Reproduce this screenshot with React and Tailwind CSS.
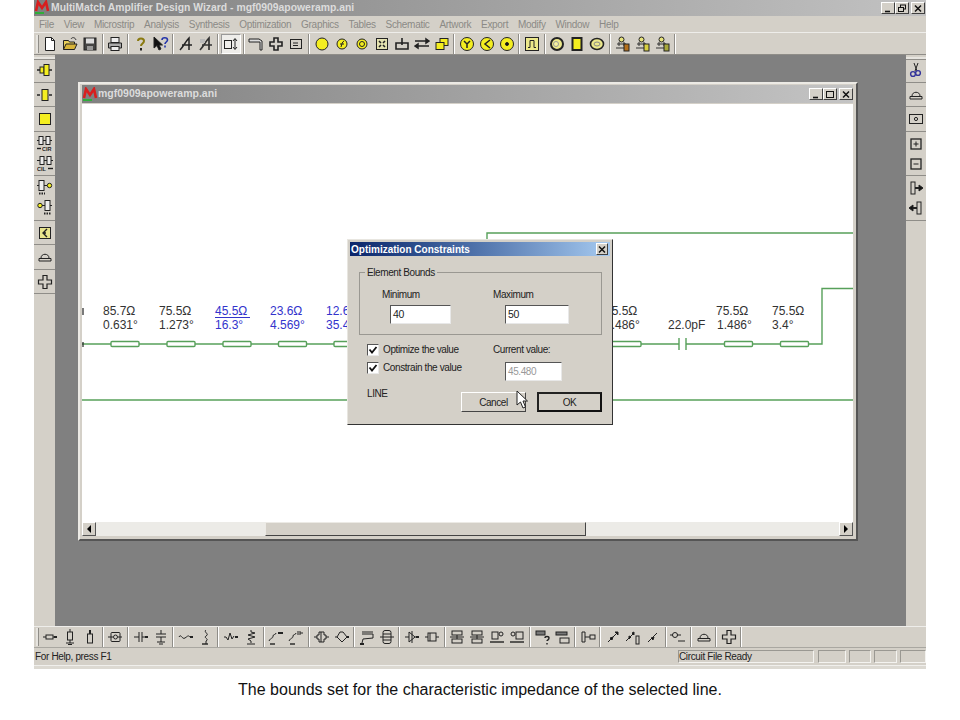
import React from 'react';

const I = ({ children }) => (
  <svg width="16" height="16" viewBox="0 0 16 16" fill="none" stroke="#222" strokeWidth="1" className="block">
    {children}
  </svg>
);

const Logo = () => (
  <svg width="16" height="15" viewBox="0 0 16 15" className="block shrink-0">
    <path d="M2 11 L4 2 L8 8 L12 2 L14 11" fill="none" stroke="#d81e1e" strokeWidth="2.6" />
    <path d="M1 13 H10" stroke="#2fae3a" strokeWidth="2" />
  </svg>
);

const Circle = ({ children, r = 5 }) => (
  <I>
    <circle cx="8" cy="8" r={r} fill="#f4ee20" />
    {children}
  </I>
);

const Hat = () => (
  <I>
    <path d="M4 9 C4 4 12 4 12 9" />
    <path d="M2 9.5 H14 V12 H2 Z" />
  </I>
);

const Plus = () => (
  <I>
    <path d="M6 1.5 H10 V6 H14.5 V10 H10 V14.5 H6 V10 H1.5 V6 H6 Z" strokeWidth="1.2" />
  </I>
);

const Person = ({ color }) => (
  <I>
    <circle cx="6.5" cy="3.5" r="2.5" fill="#e6e27a" />
    <path d="M2 8 H11 M4 6 V10 M9 6 V10 M1 12 H9" stroke="#333" />
    <rect x="9" y="8" width="5" height="7" fill={color} />
  </I>
);

const topIcons = [
  <I><path d="M3.5 1.5 H9.5 L12.5 4.5 V14.5 H3.5 Z" fill="#fff" /><path d="M9.5 1.5 V4.5 H12.5" /></I>,
  <I><path d="M1.5 13.5 V4.5 H6.5 L7.5 6 H12.5 V8" fill="#e8cf5a" /><path d="M1.5 13.5 L4 8 H15 L12.5 13.5 Z" fill="#d8b53a" /><path d="M9 3 C10 1 13 1 14 4" stroke="#333" /></I>,
  <I><rect x="2" y="2" width="12" height="12" fill="#444" /><rect x="4" y="2.5" width="8" height="5" fill="#ddd" stroke="none" /><rect x="5" y="10" width="6" height="4" fill="#999" stroke="none" /></I>,
  <I><rect x="4" y="1.5" width="8" height="5" fill="#eee" /><path d="M1.5 7 H14.5 V12 H1.5 Z" fill="#aaa" /><rect x="4" y="10.5" width="8" height="4" fill="#eee" /></I>,
  <I><path d="M5 5 C5 1.5 11 1.5 11 5 C11 7.5 8 7.5 8 10" stroke="#8a7a10" strokeWidth="2" /><path d="M8 12 V14.5" stroke="#222" strokeWidth="2" /></I>,
  <I><path d="M1 1 V12 L4 9.5 L6 14 L8 13 L6 9 H9.5 Z" fill="#111" /><path d="M9 4 C9 1 14.5 1 14.5 4 C14.5 6 12 6 12 8" stroke="#2233aa" strokeWidth="1.6" /><path d="M12 9.5 V11.5" stroke="#2233aa" strokeWidth="1.6" /></I>,
  <I><path d="M2 14 C5 11 8 5 11 2 L11 14 M4 9 H14" strokeWidth="1.5" /></I>,
  <I><path d="M2 14 C5 11 8 5 11 2 L11 14 M4 9 H14" strokeWidth="1.7" stroke="#333" /><path d="M2 3 H7 V7 H2 Z" fill="#bbb" stroke="none" /></I>,
  'pressed',
  <I><path d="M1 3 H11 L14 5 V14 H12 V6 H1 Z" fill="#ddd" /></I>,
  <I><path d="M6 2 H10 V6 H14 V10 H10 V14 H6 V10 H2 V6 H6 Z" strokeWidth="1.6" /></I>,
  <I><rect x="2.5" y="3.5" width="11" height="9" /><path d="M5 7 H10 M5 9.5 H10" /></I>,
  <Circle r={6} />,
  <Circle><path d="M7 11 C8 8 8 6 10 5 M6 8 H10" /></Circle>,
  <Circle><circle cx="8" cy="8" r="2.5" /></Circle>,
  <I><rect x="2.5" y="2.5" width="11" height="11" fill="#e4e2b0" /><path d="M5 5 L7 7 M11 5 L9 7 M5 11 L7 9 M11 11 L9 9" strokeWidth="1.6" /></I>,
  <I><path d="M2 7 H14 V13 H2 Z" strokeWidth="1.6" /><path d="M8 2 V9" strokeWidth="1.6" /></I>,
  <I><path d="M1 5 H13 M15 5 L12 3 V7 Z M3 10 H15 M1 10 L4 8 V12 Z" fill="#111" strokeWidth="1.5" /></I>,
  <I><rect x="6" y="2.5" width="8" height="7" fill="#f4ee20" /><rect x="2" y="6.5" width="8" height="7" fill="#f4ee20" /></I>,
  <Circle r={6.5}><path d="M5 5 L8 8 L11 5 M8 8 V12" strokeWidth="1.5" /></Circle>,
  <Circle r={6.5}><path d="M11 4 L6 8 L11 12" strokeWidth="1.5" /></Circle>,
  <Circle r={6.5}><circle cx="8" cy="8" r="1.5" fill="#111" /></Circle>,
  <I><rect x="1.5" y="1.5" width="13" height="13" fill="#ece88a" /><path d="M4 11.5 H6 V4.5 H10 V11.5 H12" /></I>,
  <I><circle cx="8" cy="8" r="6" fill="#ece88a" strokeWidth="2" /><circle cx="7" cy="8" r="2.5" fill="#f6f2a0" stroke="#999" /></I>,
  <I><rect x="3.5" y="2" width="9" height="12" fill="#f4ee20" strokeWidth="2" /></I>,
  <I><ellipse cx="8" cy="8" rx="6.5" ry="5.5" fill="#ece88a" strokeWidth="1.6" /><ellipse cx="8" cy="8" rx="3" ry="2" stroke="#888" /></I>,
  <Person color="#b5701c" />,
  <Person color="#d8d040" />,
  <Person color="#a8a83a" />,
];

// layout of the top bar, a number is a run of buttons
const topRuns = [3, 1, 2, 2, 1, 3, 7, 3, 1, 3, 3];

const Res = ({ x = 4, w = 7 }) => <rect x={x} y="6" width={w} height="4" />;
const Tip = () => <path d="M12 8 H15" strokeWidth="2" />;
const Stack = () => (
  <I><rect x="3" y="2" width="10" height="4" /><rect x="3" y="10" width="10" height="4" /><path d="M1 8 H15 M8 6 V10" /></I>
);
const Wave = () => <path d="M1 8 C3 4 4 11 7 9 S10 6 12 8" />;

const bottomIcons = [
  <I><path d="M1 8 H4" /><Res /><path d="M11 8 H12" /><Tip /></I>,
  <I><rect x="5.5" y="3" width="5" height="8" /><path d="M8 0 V3 M8 11 V14 M4 14 H12 M6 15.5 H10" /></I>,
  <I><rect x="5.5" y="5" width="5" height="9" /><path d="M8 1 V5" strokeWidth="2" /></I>,
  <I><rect x="4" y="3.5" width="9" height="9" rx="1" /><circle cx="8.5" cy="8" r="2" /><path d="M1 8 H6 M11 8 H15" /></I>,
  <I><path d="M1 8 H6 M6 3 V13 M9 3 V13 M9 8 H12" /><Tip /></I>,
  <I><path d="M8 1 V5 M3 5 H13 M3 8 H13 M8 8 V13 M4 13 H12 M6 15 H10" /></I>,
  <I><Wave /><Tip /></I>,
  <I><path d="M8 1 C5 3 12 5 8 7 C5 9 12 10 8 12 M8 12 V15" /><path d="M4 15 H10" strokeWidth="1.4" /></I>,
  <I><path d="M1 8 H3 L5 11 L7 4 L9 10 L11 7" /><Tip /></I>,
  <I><path d="M8 1 V3 L12 4 L5 6 L12 8 L5 10 L8 12 V14 M4 15 H12" /></I>,
  <I><path d="M1 12 C3 8 5 10 5 7 C5 5 8 6 8 4" /><path d="M10 4 H15" strokeWidth="2" /><path d="M2 15 H7" strokeWidth="1.4" /></I>,
  <I><path d="M1 12 C3 8 5 10 5 7 C5 5 8 6 8 4" /><path d="M10 2 V6 M12 2 V6 M12 4 H15" /><path d="M2 15 H7" strokeWidth="1.4" /></I>,
  <I><path d="M5 3 H10 V6 H12 V10 H10 V13 H5 V10 H3 V6 H5 Z M7 3 V13 M0 8 H3 M12 8 H15" /></I>,
  <I><path d="M1 8 H3 L6 3 H9 L13 8 L8 13 L3 8" /><path d="M13 8 H15" strokeWidth="2" /></I>,
  <I><path d="M3 3 H14 M3 5 H14 V9 L4 10 L3 14" /><path d="M1 15 H5" strokeWidth="2" /></I>,
  <I><rect x="4" y="1.5" width="8" height="13" rx="2" /><path d="M1 8 H15 M4 5 H12 M4 11 H12" /></I>,
  <I><path d="M1 8 H5 M5 3 L11 8 L5 13 Z M8 2 V14 M11 8 H13" /><Tip /></I>,
  <I><rect x="4" y="4" width="8" height="8" /><path d="M6 4 V12 M1 8 H4 M12 8 H15" /></I>,
  <Stack />,
  <Stack />,
  <I><rect x="3" y="3" width="6" height="7" /><circle cx="12" cy="5" r="2" /><path d="M1 13 H15" strokeWidth="1.4" /></I>,
  <I><circle cx="4" cy="5" r="2" /><rect x="7" y="3" width="7" height="7" /><path d="M1 13 H15" strokeWidth="1.4" /></I>,
  <I><rect x="1" y="2" width="9" height="4" fill="#777" /><path d="M10 9 C10 7 14 7 14 9 C14 11 12 11 12 12 M12 14 V15.5" strokeWidth="1.4" /></I>,
  <I><rect x="1" y="3" width="11" height="3" fill="#777" /><rect x="5" y="9" width="9" height="5" /></I>,
  <I><path d="M2 3 V13 M2 3 H5 V13 H2 M5 8 H10" /><rect x="10" y="6" width="5" height="4" /></I>,
  <I><path d="M3 13 L13 3" /><path d="M5 9 L8 8 L7 11 Z M13 3 L10 3 L13 6 Z" fill="#111" /></I>,
  <I><path d="M1 12 L9 4" /><path d="M4 7 L6 8 L4 10 Z M9 3 L7 4 L9 6 Z" fill="#111" /><rect x="11" y="7" width="3" height="8" /></I>,
  <I><path d="M3 13 L12 4" /><path d="M6 9 L9 8 L8 11 Z" fill="#111" /></I>,
  <I><circle cx="5" cy="6" r="2.5" /><path d="M0 6 H3 M7 6 H11 M8 12 H15" strokeWidth="1.2" /></I>,
  <Hat />,
  <Plus />,
];
const bottomRuns = [3, 1, 2, 2, 2, 2, 2, 2, 2, 4, 2, 1, 3, 1, 1, 1];

const Lead = ({ children }) => (
  <I>
    <path d="M0 8 H3 M12 8 H15" strokeWidth="1.6" />
    {children}
  </I>
);

const leftIcons = [
  <Lead><rect x="3" y="5" width="4" height="6" fill="#f4ee20" /><rect x="7" y="2.5" width="5" height="11" fill="#f4ee20" /></Lead>,
  <Lead><rect x="5" y="2.5" width="6" height="11" fill="#f4ee20" /></Lead>,
  <I><rect x="2.5" y="2.5" width="11" height="11" fill="#f4ee20" /></I>,
  <I><rect x="2" y="0.5" width="4" height="8" fill="#eee" /><rect x="9" y="0.5" width="4" height="8" fill="#eee" /><path d="M6 4.5 H9 M0 4.5 H2 M13 4.5 H15" /><path d="M0 12.5 H4" strokeWidth="1.4" /><text x="5" y="15" fontSize="5.5" fontWeight="700" fill="#222" stroke="none">CIR</text></I>,
  <I><rect x="3" y="0.5" width="4" height="8" fill="#eee" /><rect x="10" y="0.5" width="4" height="8" fill="#eee" /><path d="M7 4.5 H10 M0 4.5 H3 M14 4.5 H16" /><text x="0" y="15" fontSize="5.5" fontWeight="700" fill="#222" stroke="none">CIL</text><path d="M11 12.5 H16" strokeWidth="1.4" /></I>,
  <I><rect x="2" y="0.5" width="5" height="10" fill="#eee" /><path d="M7 5.5 H10 M0 5.5 H2" /><circle cx="12.5" cy="5.5" r="2.2" fill="#f4ee20" /><path d="M2 13.5 H8" strokeWidth="2" strokeDasharray="1.5 1" /></I>,
  <I><circle cx="3" cy="5.5" r="2.2" fill="#f4ee20" /><path d="M5 5.5 H8 M13 5.5 H15" /><rect x="8" y="0.5" width="5" height="10" fill="#eee" /><path d="M7 13.5 H14" strokeWidth="2" strokeDasharray="1.5 1" /></I>,
  <I><rect x="2.5" y="2.5" width="11" height="11" fill="#e8e48c" /><path d="M10 4 L6 8 L10 12 M6 8 H9" strokeWidth="1.4" /></I>,
  <Hat />,
  <Plus />,
];
const leftRuns = [1, 1, 1, 2, 2, 1, 1, 1];

const rightIcons = [
  <I><path d="M6 1 L9 9 M10 1 L7 9" /><circle cx="5" cy="12" r="2.4" stroke="#33339a" strokeWidth="1.4" /><circle cx="10" cy="11" r="2.4" stroke="#33339a" strokeWidth="1.4" /></I>,
  <Hat />,
  <I><rect x="1.5" y="3.5" width="13" height="9" /><circle cx="8" cy="8" r="1.6" /></I>,
  <I><rect x="3" y="3" width="10" height="10" strokeWidth="1.3" /><path d="M5.5 8 H10.5 M8 5.5 V10.5" /></I>,
  <I><rect x="3" y="3" width="10" height="10" strokeWidth="1.3" /><path d="M5.5 8 H10.5" /></I>,
  <I><rect x="3" y="2" width="4" height="12" /><path d="M7 8 H12" strokeWidth="2" /><path d="M15 8 L11 5 V11 Z" fill="#111" /></I>,
  <I><rect x="9" y="2" width="4" height="12" /><path d="M4 8 H9" strokeWidth="2" /><path d="M1 8 L5 5 V11 Z" fill="#111" /></I>,
];
const rightRuns = [1, 1, 1, 2, 2];

const Btn = ({ children }) => {
  if (children === 'pressed') {
    return (
      <div className="w-[20px] h-[20px] flex items-center justify-center bg-[#eeedea] border border-t-[#999] border-l-[#999] border-r-white border-b-white">
        <svg width="16" height="16" viewBox="0 0 16 16" fill="none" stroke="#222" className="block">
          <rect x="1.5" y="4.5" width="7" height="8" />
          <path d="M12 3 V13 M10 5 L12 2.5 L14 5 M10 11 L12 13.5 L14 11" />
        </svg>
      </div>
    );
  }
  return <div className="w-[20px] h-[20px] shrink-0 flex items-center justify-center">{children}</div>;
};

// walk the runs so each group of buttons ends in a separator
const HBar = ({ icons, runs }) => {
  let n = 0;
  return runs.map((run, i) => {
    const group = icons.slice(n, n + run);
    n += run;
    return (
      <React.Fragment key={i}>
        {group.map((ic, j) => <Btn key={j}>{ic}</Btn>)}
        <div className="w-[5.25px] h-[20px] flex justify-center">
          <div className="w-[1px] h-full bg-[#8f8d88] border-r border-white box-content" />
        </div>
      </React.Fragment>
    );
  });
};

const VBar = ({ icons, runs }) => {
  let n = 0;
  return runs.map((run, i) => {
    const group = icons.slice(n, n + run);
    n += run;
    return (
      <React.Fragment key={i}>
        {group.map((ic, j) => <Btn key={j}>{ic}</Btn>)}
        <div className="h-[4.5px] w-full flex items-center">
          <div className="h-[1px] w-full bg-[#8f8d88]" />
        </div>
      </React.Fragment>
    );
  });
};

const Grip = () => <div className="w-[3px] h-[18px] ml-[2px] mr-[1px] bg-[#e6e4df] border-r border-[#8f8d88]" />;
const VGrip = () => <div className="h-[3px] w-full mt-[2px] bg-[#e6e4df] border-b border-[#8f8d88]" />;

const CaptionBtn = ({ children, className = 'w-[14px]' }) => (
  <div className={`${className} h-[12px] bg-[#d4d0c8] border border-t-white border-l-white border-r-[#404040] border-b-[#404040] flex items-center justify-center`}>
    <svg width="10" height="9" viewBox="0 0 10 9" fill="none" stroke="#111" className="block">{children}</svg>
  </div>
);

const Check = () => (
  <div className="w-[12px] h-[12px] bg-white border border-t-[#555] border-l-[#555] border-r-[#e8e8e8] border-b-[#e8e8e8] flex items-center justify-center shrink-0">
    <svg width="10" height="10" viewBox="0 0 10 10" fill="none" stroke="#111" strokeWidth="1.8" className="block">
      <path d="M1.5 4.5 L4 7.5 L8.5 2" />
    </svg>
  </div>
);

const Input = ({ value, className }) => (
  <div className={`${className} h-[19px] bg-white border border-t-[#555] border-l-[#555] border-r-[#e8e8e8] border-b-[#e8e8e8] pl-[2px] text-[10.5px] leading-[17px] text-[#222]`}>
    {value}
  </div>
);

const Schematic = () => (
  <svg width="771" height="419" viewBox="82 104 771 419" className="absolute left-0 top-0 font-['Liberation_Sans',Arial,sans-serif]">
    <g fill="none" stroke="#57a05a" strokeWidth="1.4">
      <path d="M487 240 V233 H853" />
      <path d="M82 344 H400" />
      <path d="M600 344 H679 M686 344 H822 V288.5 H853" />
      <path d="M82 400 H853" />
      <path d="M679 338 V350 M686 338 V350" />
      <g fill="#fff">
        <rect x="111" y="341.5" width="28" height="5" rx="1" />
        <rect x="167" y="341.5" width="28" height="5" rx="1" />
        <rect x="223" y="341.5" width="28" height="5" rx="1" />
        <rect x="278.5" y="341.5" width="28" height="5" rx="1" />
        <rect x="334" y="341.5" width="28" height="5" rx="1" />
        <rect x="612" y="341.5" width="29" height="5" rx="1" />
        <rect x="724.5" y="341.5" width="28" height="5" rx="1" />
        <rect x="780.5" y="341.5" width="28" height="5" rx="1" />
      </g>
    </g>
    <path d="M83 308 V315 M83 342 V347" stroke="#222" strokeWidth="1.2" />
    <path d="M215 317.5 H250" stroke="#3333cc" strokeWidth="1" />
    <g fontSize="12" fill="#333">
      <text x="103" y="315">85.7Ω</text>
      <text x="103" y="329">0.631°</text>
      <text x="159" y="315">75.5Ω</text>
      <text x="159" y="329">1.273°</text>
      <text x="605" y="315">75.5Ω</text>
      <text x="605" y="329">1.486°</text>
      <text x="668" y="329">22.0pF</text>
      <text x="716" y="315">75.5Ω</text>
      <text x="717" y="329">1.486°</text>
      <text x="772" y="315">75.5Ω</text>
      <text x="772" y="329">3.4°</text>
    </g>
    <g fontSize="12" fill="#3333cc">
      <text x="215" y="315">45.5Ω</text>
      <text x="215" y="329">16.3°</text>
      <text x="270" y="315">23.6Ω</text>
      <text x="270" y="329">4.569°</text>
      <text x="326" y="315">12.6Ω</text>
      <text x="326" y="329">35.4°</text>
    </g>
  </svg>
);

const menus = ['File', 'View', 'Microstrip', 'Analysis', 'Synthesis', 'Optimization', 'Graphics', 'Tables', 'Schematic', 'Artwork', 'Export', 'Modify', 'Window', 'Help'];

const Dialog = () => (
  <div className="absolute left-[292px] top-[184px] w-[266px] h-[186px] bg-[#d4d0c8] border border-t-[#e8e6e0] border-l-[#e8e6e0] border-r-[#333] border-b-[#333] p-[2px] text-[10px] tracking-[-0.4px] text-[#222]">
    <div className="h-[14px] flex items-center justify-between pl-[1px] pr-[2px] bg-gradient-to-r from-[#0a246a] to-[#a6caf0]">
      <span className="text-white font-bold text-[10px] tracking-normal">Optimization Constraints</span>
      <CaptionBtn className="w-[12px]"><path d="M2 1.5 L8 7.5 M8 1.5 L2 7.5" strokeWidth="1.5" /></CaptionBtn>
    </div>
    <div className="relative mt-[16px] ml-[9px] w-[243px] h-[63px] border border-[#9a9892]">
      <span className="absolute -top-[6px] left-[5px] bg-[#d4d0c8] px-[2px] leading-[12px]">Element Bounds</span>
      <div className="flex pt-[16px]">
        <div className="w-[111px] pl-[22px]">
          <div className="leading-[12px]">Minimum</div>
          <Input value="40" className="w-[61px] mt-[4px] ml-[8px]" />
        </div>
        <div className="pl-[22px]">
          <div className="leading-[12px]">Maximum</div>
          <Input value="50" className="w-[64px] mt-[4px] ml-[12px]" />
        </div>
      </div>
    </div>
    <div className="flex mt-[9px] ml-[17px]">
      <div className="w-[126px] flex flex-col gap-[6px] leading-[12px]">
        <div className="flex items-center gap-[4px]"><Check /><span>Optimize the value</span></div>
        <div className="flex items-center gap-[4px]"><Check /><span>Constrain the value</span></div>
      </div>
      <div>
        <div className="leading-[12px]">Current value:</div>
        <Input value="45.480" className="w-[57px] mt-[6px] ml-[12px] bg-[#d4d0c8] text-[#999] text-[10px]" />
      </div>
    </div>
    <div className="flex items-start mt-[11px] ml-[17px] h-[20px]">
      <span className="w-[94px] leading-[12px] -mt-[4px]">LINE</span>
      <div className="w-[65px] h-[20px] flex items-center justify-center border border-t-white border-l-white border-r-[#444] border-b-[#444]">Cancel</div>
      <div className="w-[65px] h-[20px] ml-[11px] flex items-center justify-center border-2 border-t-[#222] border-l-[#222] border-r-[#111] border-b-[#111]">OK</div>
    </div>
    <svg width="12" height="20" viewBox="0 0 12 20" className="absolute left-[168px] top-[150px] block">
      <path d="M1 1 V15 L4.5 12 L7 18 L9.5 17 L7 11 H11.5 Z" fill="#fff" stroke="#222" />
    </svg>
  </div>
);

const ChildWindow = () => (
  <div className="absolute left-[23px] top-[27px] w-[780px] h-[459px] flex flex-col bg-[#d4d0c8] border-t-2 border-l-2 border-r-2 border-b-2 border-t-[#eceae5] border-l-[#eceae5] border-r-[#555] border-b-[#555] pt-[1px] pl-[2px] pr-[3px] pb-[3px]">
    <div className="h-[18px] shrink-0 flex items-center justify-between bg-gradient-to-r from-[#808080] to-[#c4c4c4]">
      <div className="flex items-center">
        <Logo />
        <span className="text-[#dcdcdc] font-bold text-[10.5px]">mgf0909apoweramp.ani</span>
      </div>
      <div className="flex">
        <CaptionBtn><path d="M2 7.5 H7" strokeWidth="1.6" /></CaptionBtn>
        <CaptionBtn><rect x="1.5" y="1.5" width="7" height="6" /></CaptionBtn>
        <div className="ml-[2px]"><CaptionBtn><path d="M2 1.5 L8 7.5 M8 1.5 L2 7.5" strokeWidth="1.5" /></CaptionBtn></div>
      </div>
    </div>
    <div className="relative mt-[1px] flex-1 bg-white overflow-hidden">
      <Schematic />
    </div>
    <div className="h-[14px] shrink-0 flex bg-[#ecebe7]">
      <div className="w-[14px] h-full bg-[#d4d0c8] border border-t-white border-l-white border-r-[#555] border-b-[#555] flex items-center justify-center">
        <div className="w-0 h-0 border-y-[4px] border-y-transparent border-r-[4px] border-r-black" />
      </div>
      <div className="w-[169px]" />
      <div className="w-[321px] h-full bg-[#d4d0c8] border border-t-[#eceae5] border-l-[#eceae5] border-r-[#444] border-b-[#444]" />
      <div className="flex-1" />
      <div className="w-[14px] h-full bg-[#d4d0c8] border border-t-white border-l-white border-r-[#555] border-b-[#555] flex items-center justify-center">
        <div className="w-0 h-0 border-y-[4px] border-y-transparent border-l-[4px] border-l-black" />
      </div>
    </div>
  </div>
);

const Pane = ({ className, children }) => (
  <div className={`${className} h-[13px] border border-t-[#9a9892] border-l-[#9a9892] border-r-[#f4f3f0] border-b-[#f4f3f0] leading-[11px] whitespace-nowrap`}>
    {children}
  </div>
);

export default function App() {
  return (
    <div className="min-h-[720px] bg-white font-['Liberation_Sans',Arial,sans-serif]">
      <div className="ml-[34px] w-[892px] bg-[#d4d0c8]">
        <div className="h-[16px] flex items-center justify-between bg-gradient-to-r from-[#7f7f7f] to-[#c2c2c2] pr-[1px]">
          <div className="flex items-center gap-[1px]">
            <Logo />
            <span className="text-[#dcdcdc] font-bold text-[10.4px]">MultiMatch Amplifier Design Wizard - mgf0909apoweramp.ani</span>
          </div>
          <div className="flex">
            <CaptionBtn><path d="M2 7.5 H7" strokeWidth="1.6" /></CaptionBtn>
            <CaptionBtn><rect x="3.5" y="1" width="5" height="4" /><rect x="1.5" y="3.5" width="5" height="4" fill="#d4d0c8" /></CaptionBtn>
            <div className="ml-[2px]"><CaptionBtn><path d="M2 1.5 L8 7.5 M8 1.5 L2 7.5" strokeWidth="1.5" /></CaptionBtn></div>
          </div>
        </div>

        <div className="h-[17px] flex items-center gap-[9.85px] pl-[5px] text-[10px] tracking-[-0.3px] text-[#8b8a86] border-b border-[#eeedea]">
          {menus.map((m) => <span key={m}>{m}</span>)}
        </div>

        <div className="h-[22px] flex items-center border-b border-[#8f8d88]">
          <Grip />
          <HBar icons={topIcons} runs={topRuns} />
        </div>

        <div className="h-[571px] flex">
          <div className="w-[21px] flex flex-col items-center">
            <VGrip />
            <VBar icons={leftIcons} runs={leftRuns} />
          </div>
          <div className="relative flex-1 bg-[#808080]">
            <ChildWindow />
            <Dialog />
          </div>
          <div className="w-[20px] flex flex-col items-center">
            <VGrip />
            <VBar icons={rightIcons} runs={rightRuns} />
          </div>
        </div>

        <div className="h-[21px] flex items-center border-t border-[#eeedea]">
          <Grip />
          <HBar icons={bottomIcons} runs={bottomRuns} />
        </div>

        <div className="h-[18px] flex items-center justify-between border-t border-[#a9a7a1] text-[10px] tracking-[-0.35px] text-[#222] pl-[1px]">
          <span>For Help, press F1</span>
          <div className="flex gap-[3px]">
            <Pane className="w-[136px] mr-[1px]">Circuit File Ready</Pane>
            <Pane className="w-[28px]" />
            <Pane className="w-[22px]" />
            <Pane className="w-[23px]" />
            <Pane className="w-[26px]" />
          </div>
        </div>
        <div className="h-[4px] bg-[#dcd9d2] border-t border-[#f0efec]" />
      </div>
      <p className="mt-[13px] text-center text-[16px] leading-[16px] text-[#111]">
        The bounds set for the characteristic impedance of the selected line.
      </p>
    </div>
  );
}
